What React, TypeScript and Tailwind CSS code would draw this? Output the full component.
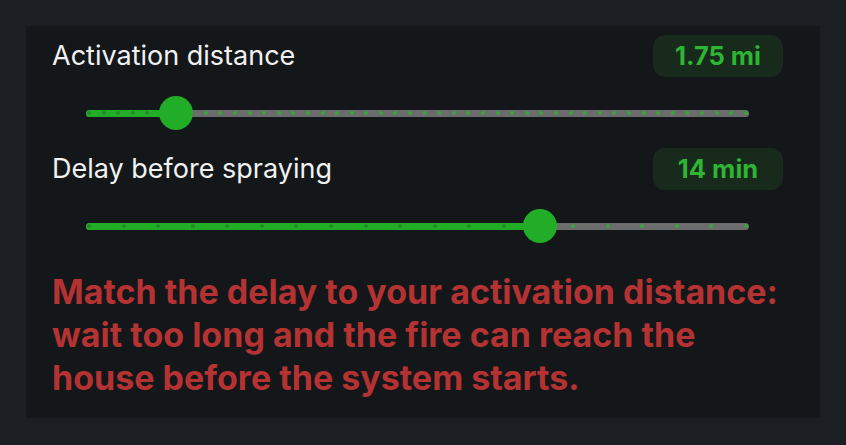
import React from "react";

type SliderSpec = {
  label: string;
  value: number;
  min: number;
  max: number;
  ticks: number;
  display: string;
};

const SLIDERS: SliderSpec[] = [
  { label: "Activation distance", value: 1.75, min: 0.25, max: 11.25, ticks: 46, display: "1.75 mi" },
  { label: "Delay before spraying", value: 14, min: 1, max: 20, ticks: 20, display: "14 min" },
];

function TickSlider({ spec }: { spec: SliderSpec }) {
  const pct = ((spec.value - spec.min) / (spec.max - spec.min)) * 100;
  return (
    <div className="relative mx-[34px] flex h-[34px] items-center">
      <div className="relative h-[7px] w-full rounded-full bg-[#6c6c6c]">
        <div
          className="absolute inset-y-0 left-0 rounded-full bg-[#22ac27]"
          style={{ width: `${pct}%` }}
        />
        <div className="absolute inset-0 flex items-center justify-between px-[1px]">
          {Array.from({ length: spec.ticks }).map((_, i) => {
            const on = (i / (spec.ticks - 1)) * 100 < pct;
            return (
              <span
                key={i}
                className={`h-[4px] w-[4px] rounded-full ${on ? "bg-[#1f8f25]" : "bg-[#35a83a]"}`}
              />
            );
          })}
        </div>
      </div>
      <div
        className="absolute top-0 h-[34px] w-[34px] -translate-x-1/2 rounded-full bg-[#21ad27]"
        style={{ left: `${pct}%` }}
      />
    </div>
  );
}

export default function App() {
  return (
    <div
      className="h-[445px] w-[846px] bg-[#1b1e22] p-[26px]"
      style={{ fontFamily: "Inter, 'Noto Sans', sans-serif" }}
    >
      <div className="flex h-[392px] flex-col bg-[#14171a] pl-[26px] pr-[37px] pt-[9px]">
        {SLIDERS.map((s, i) => (
          <div key={s.label} className={i === 0 ? "" : "mt-[18px]"}>
            <div className="flex h-[42px] items-center justify-between">
              <span className="text-[27px] text-[#f1f1f1]">{s.label}</span>
              <span className="flex h-[42px] w-[130px] items-center justify-center rounded-[12px] bg-[#182a1b] text-[25.5px] font-bold text-[#2db533]">
                {s.display}
              </span>
            </div>
            <div className="mt-[19px]">
              <TickSlider spec={s} />
            </div>
          </div>
        ))}
        <p className="mt-[27px] whitespace-nowrap text-[34px] font-bold leading-[43px] text-[#b53232]">
          Match the delay to your activation distance:
          <br />
          wait too long and the fire can reach the
          <br />
          house before the system starts.
        </p>
      </div>
    </div>
  );
}
